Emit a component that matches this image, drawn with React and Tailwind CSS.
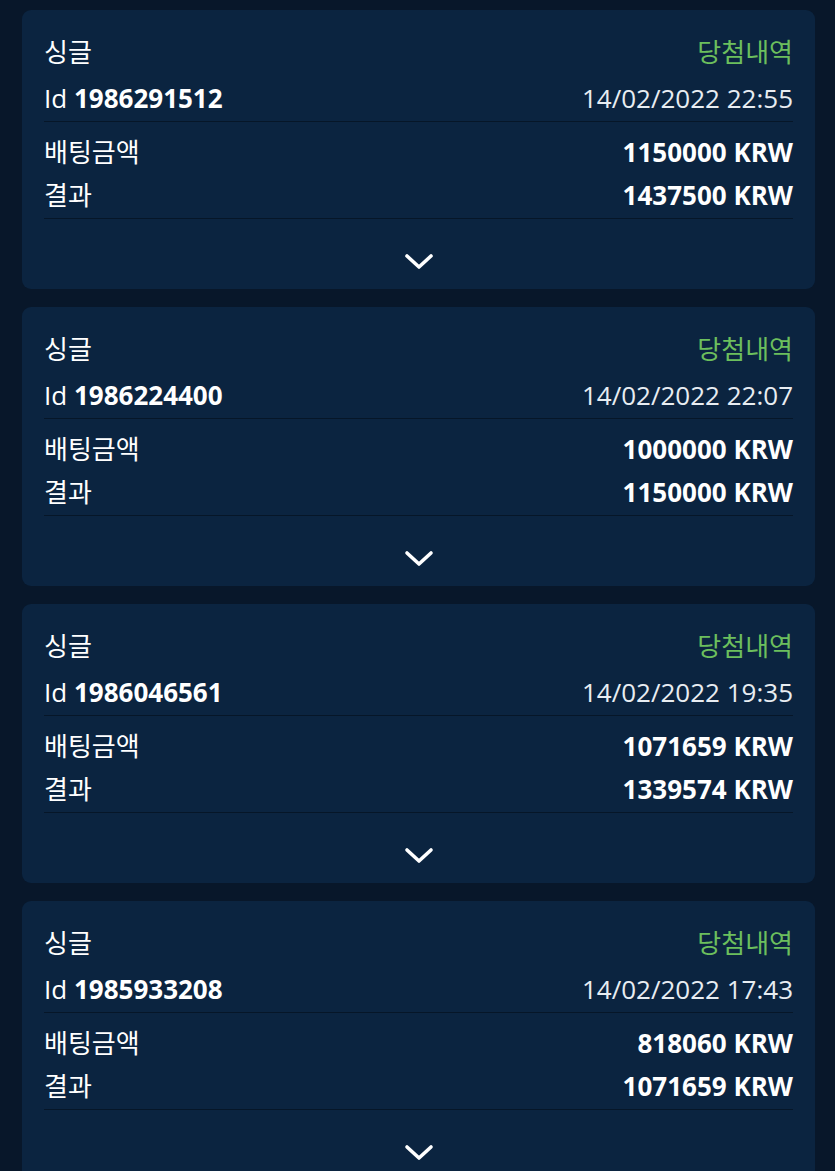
import React from 'react';

const bets = [
    { id: '1986291512', date: '14/02/2022 22:55', stake: '1150000 KRW', result: '1437500 KRW' },
    { id: '1986224400', date: '14/02/2022 22:07', stake: '1000000 KRW', result: '1150000 KRW' },
    { id: '1986046561', date: '14/02/2022 19:35', stake: '1071659 KRW', result: '1339574 KRW' },
    { id: '1985933208', date: '14/02/2022 17:43', stake: '818060 KRW', result: '1071659 KRW' },
];

const Chevron = () => (
    <svg width="30" height="18" viewBox="0 0 30 18" fill="none">
        <polyline points="3,3 15,14 27,3" stroke="#ffffff" strokeWidth="3.6" strokeLinecap="round" strokeLinejoin="round" />
    </svg>
);

const BetCard = ({ bet }) => (
    <div className="bg-[#0b2440] rounded-[9px] px-[22px] pt-[19px] pb-[18px]">
        <div className="h-[46px] flex items-center justify-between">
            <span>싱글</span>
            <span className="text-[#6cbf5d]">당첨내역</span>
        </div>
        <div className="h-[46px] flex items-center justify-between">
            <span>Id <span className="font-bold">{bet.id}</span></span>
            <span className="text-[#e8edf2]">{bet.date}</span>
        </div>
        <div className="h-px bg-[#061628]" />
        <div className="pt-[9px] pb-px">
            <div className="h-[43px] flex items-center justify-between">
                <span>배팅금액</span>
                <span className="font-bold">{bet.stake}</span>
            </div>
            <div className="h-[43px] flex items-center justify-between">
                <span>결과</span>
                <span className="font-bold">{bet.result}</span>
            </div>
        </div>
        <div className="h-px bg-[#061628]" />
        <div className="pt-[34px] flex justify-center">
            <Chevron />
        </div>
    </div>
);

const App = () => {
    return (
        <div
            className="min-h-[1171px] bg-[#08172a] pl-[22px] pr-[20px] pt-[10px] pb-[20px] flex flex-col gap-[18px] text-white text-[26px]"
            style={{ fontFamily: '"Open Sans", "Noto Sans CJK KR", sans-serif' }}
        >
            {bets.map(bet => (
                <BetCard key={bet.id} bet={bet} />
            ))}
        </div>
    );
};

export default App;
